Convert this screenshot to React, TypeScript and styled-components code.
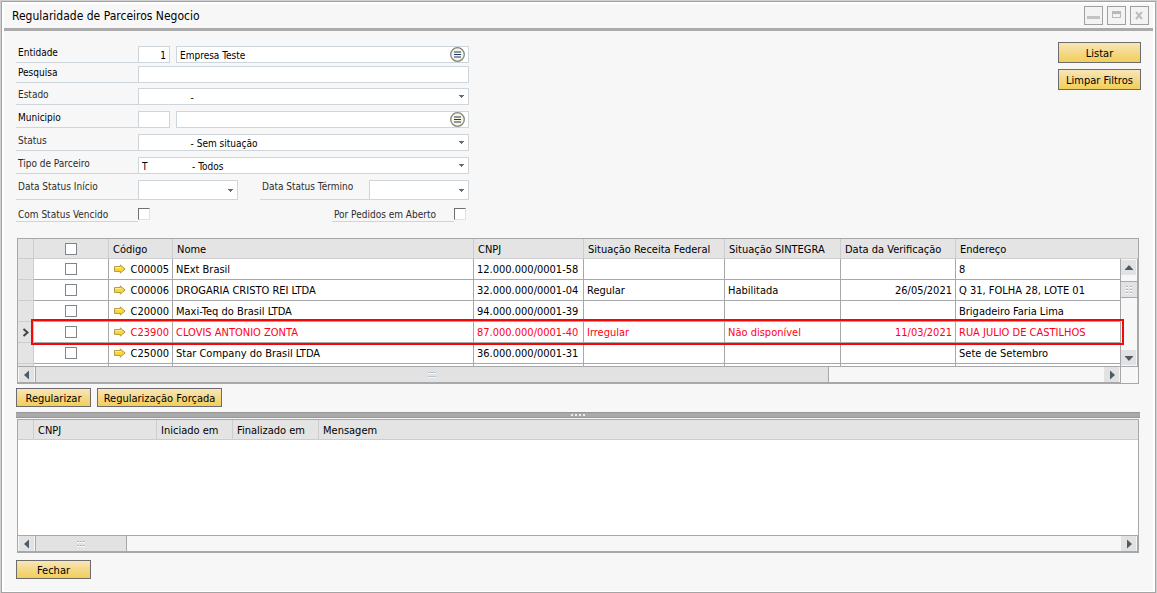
import React from 'react';
import styled, { createGlobalStyle, css } from 'styled-components';

const LINE = '#a6a8ab';
const SOFT = '#cdcdcd';
const FIELD = '#cfd6db';
const EM = '\u2003';
const NB = '\u00a0';

const GlobalStyle = createGlobalStyle`
  *, *::before, *::after { box-sizing: border-box; }
  body { margin: 0; background: #cfcfcf; }
  body, input, select, button, table {
    font-family: "DejaVu Sans Condensed", "DejaVu Sans", sans-serif;
    font-size: 11px;
    line-height: 14px;
    color: #000;
  }
`;

const Page = styled.div`
  min-height: 100vh;
  padding: 1px 1px 0;
  display: flex;
`;

const Frame = styled.main`
  flex: 1;
  min-width: 0;
  border: 1px solid #a4a4a4;
  background: #fff;
  padding: 2px 2px 1px;
  display: flex;
`;

const Inner = styled.div`
  flex: 1;
  min-width: 0;
  background: #f7f7f7;
`;

const TitleBar = styled.header`
  height: 27px;
  padding: 2px 4px 0 8px;
  display: flex;
  align-items: flex-start;
  justify-content: space-between;
  border-bottom: 3px solid #ababab;
`;

const Title = styled.h1`
  margin: 2px 0 0;
  font-size: 12px;
  line-height: 16px;
  font-weight: normal;
`;

const WindowControls = styled.div`
  display: flex;
  gap: 4px;
`;

const WindowButton = styled.button`
  width: 19px;
  height: 19px;
  padding: 0;
  border: 1px solid #a0a0a0;
  background: #f3f3f3;
  svg { display: block; }
`;

const Body = styled.div`
  padding: 11px 12px 11px;
`;

const Top = styled.div`
  display: flex;
  justify-content: space-between;
  align-items: flex-start;
`;

const Form = styled.form`
  width: 453px;
  margin-top: 4px;
  display: flex;
  flex-direction: column;
  gap: 5px;
`;

const RowGroup = styled.div<{ $gap: number }>`
  display: flex;
  flex-direction: column;
  gap: ${(p) => p.$gap}px;
`;

const FormRow = styled.div`
  display: flex;
`;

const CheckRow = styled(FormRow)`
  padding-top: 3px;
`;

const Label = styled.label<{ $width?: number; $strong?: boolean }>`
  flex: none;
  width: ${(p) => p.$width ?? 122}px;
  padding-left: 2px;
  border-bottom: 1px solid ${FIELD};
  font-size: 10px;
  line-height: 13px;
  color: ${(p) => (p.$strong ? '#000' : '#2c2c2c')};
`;

const FieldBox = styled.div<{ $width?: number; $height?: number }>`
  position: relative;
  display: flex;
  align-items: center;
  ${(p) => (p.$width ? css`flex: none; width: ${p.$width}px;` : css`flex: 1; min-width: 0;`)}
  height: ${(p) => p.$height ?? 17}px;
  border: 1px solid ${FIELD};
  background: #fff;
`;

const Gap = styled.span<{ $size: number }>`
  flex: none;
  width: ${(p) => p.$size}px;
`;

const TextInput = styled.input<{ $right?: boolean }>`
  flex: 1;
  min-width: 0;
  height: 15px;
  border: 0;
  outline: 0;
  padding: 2px 3px 0;
  background: transparent;
  font-size: 10px;
  line-height: 13px;
  text-align: ${(p) => (p.$right ? 'right' : 'left')};
`;

const Select = styled.select`
  appearance: none;
  flex: 1;
  min-width: 0;
  height: 15px;
  border: 0;
  outline: 0;
  padding: 2px 3px 0;
  background: transparent;
  font-size: 10px;
  line-height: 13px;
`;

const Caret = styled.svg`
  position: absolute;
  right: 4px;
  top: 0;
  bottom: 0;
  margin: auto 0;
  pointer-events: none;
`;

const PickButton = styled.button`
  flex: none;
  width: 15px;
  height: 15px;
  margin-right: 3px;
  padding: 0;
  border: 0;
  background: none;
  svg { display: block; }
`;

const FormCheck = styled.input`
  appearance: none;
  flex: none;
  width: 12px;
  height: 12px;
  margin: 0;
  background: #fff;
  border: 1px solid #e2e2e2;
  border-top-color: #6f6f6f;
  border-left-color: #6f6f6f;
`;

const Actions = styled.div`
  display: flex;
  flex-direction: column;
  gap: 6px;
`;

const GoldButton = styled.button<{ $width: number; $height?: number }>`
  width: ${(p) => p.$width}px;
  height: ${(p) => p.$height ?? 19}px;
  padding: 2px 0 0;
  border: 1px solid #6c6c6c;
  background: linear-gradient(#f7e6b8, #f5d888 50%, #f2cf58);
  white-space: nowrap;
`;

const Grid = styled.section`
  position: relative;
  margin: 16px 2px 0 1px;
  border: 1px solid ${LINE};
  background: #fff;
`;

const LogGrid = styled(Grid)`
  margin-top: 1px;
`;

const GridMain = styled.div`
  display: flex;
`;

const TableClip = styled.div<{ $height: number }>`
  flex: 1;
  min-width: 0;
  height: ${(p) => p.$height}px;
  overflow: hidden;
`;

const Table = styled.table`
  width: 100%;
  table-layout: fixed;
  border-collapse: separate;
  border-spacing: 0;
`;

const Th = styled.th<{ $center?: boolean }>`
  height: 20px;
  padding: ${(p) => (p.$center ? '0' : '2px 0 0 4px')};
  background: #e4e4e4;
  border-right: 1px solid ${SOFT};
  border-bottom: 1px solid ${SOFT};
  font-weight: normal;
  text-align: left;
  white-space: nowrap;
  &:last-child { border-right: 0; }
`;

const Td = styled.td<{ $right?: boolean; $center?: boolean }>`
  height: 21px;
  padding: ${(p) => (p.$center ? '0' : '1px 3px 0')};
  border-right: 1px solid ${LINE};
  border-bottom: 1px solid ${LINE};
  text-align: ${(p) => (p.$right ? 'right' : 'left')};
  white-space: nowrap;
  overflow: hidden;
`;

const RowHead = styled.td`
  padding: 0;
  background: #e4e4e4;
  border-right: 1px solid ${SOFT};
  border-bottom: 1px solid ${SOFT};
  svg { display: block; margin-left: 4px; }
`;

const Tr = styled.tr<{ $alert?: boolean }>`
  color: ${(p) => (p.$alert ? '#ff0018' : '#000')};
`;

const CenterCell = styled.div`
  display: flex;
  justify-content: center;
`;

const Check = styled.input`
  appearance: none;
  width: 12px;
  height: 12px;
  margin: 0;
  background: #fff;
  border: 1px solid #80858c;
`;

const Code = styled.div`
  display: flex;
  align-items: center;
  gap: 5px;
  padding-left: 2px;
  svg { margin-bottom: 2px; }
`;

const VScroll = styled.div`
  flex: none;
  width: 17px;
  display: flex;
  flex-direction: column;
`;

const ScrollCap = styled.div`
  height: 20px;
  background: #e4e4e4;
  border-bottom: 1px solid ${SOFT};
`;

const VTrack = styled.div`
  flex: 1;
  display: flex;
  flex-direction: column;
  background: #f7f7f7;
  border-right: 1px solid ${LINE};
`;

const ScrollButton = styled.button`
  flex: none;
  width: 15px;
  height: 15px;
  margin: 0 1px;
  padding: 0;
  border: 0;
  background: #e2e2e2;
  display: flex;
  align-items: center;
  justify-content: center;
`;

const VButton = styled(ScrollButton)`
  margin: 1px 0;
`;

const VThumb = styled.div`
  height: 17px;
  margin-top: 5px;
  background: #e2e2e2;
  border: solid ${LINE};
  border-width: 1px 0;
  display: flex;
  align-items: center;
  justify-content: center;
`;

const Spacer = styled.div`
  flex: 1;
`;

const HRow = styled.div`
  display: flex;
  background: #f7f7f7;
  border-top: 1px solid ${LINE};
`;

const HTrack = styled.div`
  flex: 1;
  height: 16px;
  display: flex;
  align-items: center;
  border-right: 1px solid ${LINE};
  border-bottom: 1px solid ${LINE};
`;

const HRail = styled.div`
  flex: 1;
  align-self: stretch;
  display: flex;
`;

const HThumb = styled.div<{ $share: number }>`
  width: ${(p) => p.$share}%;
  background: #e2e2e2;
  border: solid ${LINE};
  border-width: 0 1px;
  display: flex;
  align-items: center;
  justify-content: center;
`;

const Corner = styled.div`
  width: 17px;
`;

const Highlight = styled.div`
  position: absolute;
  left: 13px;
  right: 14px;
  top: 80px;
  height: 26px;
  border: 2px solid #fa0505;
  pointer-events: none;
`;

const ButtonRow = styled.div`
  display: flex;
  gap: 6px;
  margin-top: 4px;
`;

const FooterRow = styled(ButtonRow)`
  margin-top: 7px;
`;

const Splitter = styled.div`
  height: 6px;
  margin: 5px 1px 0 0;
  background: #a9a9a9;
  border: solid #959595;
  border-width: 1px 0;
  display: flex;
  align-items: center;
  justify-content: center;
`;

function Down() {
  return (
    <Caret width="5" height="3" viewBox="0 0 5 3" shapeRendering="crispEdges">
      <path d="M0 0h5v1H0zM1 1h3v1H1zM2 2h1v1H2z" fill="#6d6d6d" />
    </Caret>
  );
}

function PickIcon() {
  return (
    <svg width="15" height="15" viewBox="0 0 15 15">
      <circle cx="7.5" cy="7.5" r="6.8" fill="#f7f5e3" stroke="#85857f" strokeWidth="1.3" />
      <path d="M4 5h7M4 7.500h7M4 10h7" stroke="#22386b" strokeWidth="1.2" />
    </svg>
  );
}

function LinkArrow() {
  return (
    <svg width="12" height="10" viewBox="0 0 12 10">
      <path d="M.5 2.500h6V.8L11.500 5 6.500 9.200V7.500H.5z" fill="#f8d938" stroke="#b09440" strokeLinejoin="round" />
      <path d="M1.200 3.500h6" stroke="#fff1a0" />
    </svg>
  );
}

const arrows: Record<string, string> = {
  up: 'M5 2L9.500 7H.5z',
  down: 'M.5 3h9L5 8z',
  left: 'M7 .5v9L2 5z',
  right: 'M3 .5v9L8 5z',
};

function ScrollArrow({ dir }: { dir: string }) {
  return (
    <svg width="10" height="10" viewBox="0 0 10 10">
      <path d={arrows[dir]} fill="#4b5b69" />
    </svg>
  );
}

function Grip({ vertical }: { vertical?: boolean }) {
  const pts = vertical
    ? [[0, 0], [4, 0], [0, 3], [4, 3], [0, 6], [4, 6]]
    : [[0, 0], [3, 0], [6, 0], [0, 4], [3, 4], [6, 4]];
  return (
    <svg width="8" height="8" viewBox={vertical ? '-1 0 8 8' : '0 -1 8 8'} shapeRendering="crispEdges">
      {pts.map(([x, y]) => (
        <g key={`${x}-${y}`}>
          <rect x={x} y={y} width="2" height="2" fill="#fff" />
          <rect x={x} y={y} width="2" height="1" fill="#a9b5c2" />
        </g>
      ))}
    </svg>
  );
}

function SelectField({ id, text, width, height }: { id: string; text: string; width?: number; height?: number }) {
  return (
    <FieldBox $width={width} $height={height}>
      <Select id={id}>
        <option>{text}</option>
      </Select>
      <Down />
    </FieldBox>
  );
}

function HorizontalScroll({ share, corner }: { share: number; corner?: boolean }) {
  return (
    <HRow>
      <HTrack>
        <ScrollButton aria-label="Rolar para a esquerda"><ScrollArrow dir="left" /></ScrollButton>
        <HRail>
          <HThumb $share={share}><Grip /></HThumb>
        </HRail>
        <ScrollButton aria-label="Rolar para a direita"><ScrollArrow dir="right" /></ScrollButton>
      </HTrack>
      {corner && <Corner />}
    </HRow>
  );
}

interface Partner {
  code: string;
  name: string;
  cnpj: string;
  federal?: string;
  sintegra?: string;
  date?: string;
  address: string;
  alert?: boolean;
}

const partners: Partner[] = [
  { code: 'C00005', name: 'NExt Brasil', cnpj: '12.000.000/0001-58', address: '8' },
  { code: 'C00006', name: 'DROGARIA CRISTO REI LTDA', cnpj: '32.000.000/0001-04', federal: 'Regular', sintegra: 'Habilitada', date: '26/05/2021', address: 'Q 31, FOLHA 28, LOTE 01' },
  { code: 'C20000', name: 'Maxi-Teq do Brasil LTDA', cnpj: '94.000.000/0001-39', address: 'Brigadeiro Faria Lima' },
  { code: 'C23900', name: 'CLOVIS ANTONIO ZONTA', cnpj: '87.000.000/0001-40', federal: 'Irregular', sintegra: 'Não disponível', date: '11/03/2021', address: 'RUA JULIO DE CASTILHOS', alert: true },
  { code: 'C25000', name: 'Star Company do Brasil LTDA', cnpj: '36.000.000/0001-31', address: 'Sete de Setembro' },
];

const columnWidths = [16, 75, 64, 301, 110, 141, 116, 115];
const headings = ['Código', 'Nome', 'CNPJ', 'Situação Receita Federal', 'Situação SINTEGRA', 'Data da Verificação', 'Endereço'];
const logWidths = [16, 123, 76, 86];

const Col = styled.col<{ $width?: number }>`
  ${(p) => p.$width && css`width: ${p.$width}px;`}
`;

export default function App() {
  return (
    <Page>
      <GlobalStyle />
      <Frame>
        <Inner>
          <TitleBar>
            <Title>Regularidade de Parceiros Negocio</Title>
            <WindowControls>
              <WindowButton aria-label="Minimizar">
                <svg width="17" height="17" viewBox="0 0 17 17"><path d="M2 9h13v3H2z" fill="#c3c3c3" /></svg>
              </WindowButton>
              <WindowButton aria-label="Maximizar">
                <svg width="17" height="17" viewBox="0 0 17 17" shapeRendering="crispEdges">
                  <path d="M4 4h9v7H4zM5 7v3h7V7z" fill="#b9b9b9" fillRule="evenodd" />
                </svg>
              </WindowButton>
              <WindowButton aria-label="Fechar janela">
                <svg width="17" height="17" viewBox="0 0 17 17">
                  <path d="M5 5l6 7M11 5l-6 7" stroke="#bdbdbd" strokeWidth="2" />
                </svg>
              </WindowButton>
            </WindowControls>
          </TitleBar>
          <Body>
            <Top>
              <Form>
                <RowGroup $gap={3}>
                  <FormRow>
                    <Label htmlFor="entidade" $strong>Entidade</Label>
                    <FieldBox $width={32}><TextInput id="entidade" defaultValue="1" $right /></FieldBox>
                    <Gap $size={6} />
                    <FieldBox>
                      <TextInput aria-label="Nome da entidade" defaultValue="Empresa Teste" />
                      <PickButton type="button" aria-label="Escolher entidade"><PickIcon /></PickButton>
                    </FieldBox>
                  </FormRow>
                  <FormRow>
                    <Label htmlFor="pesquisa" $strong>Pesquisa</Label>
                    <FieldBox><TextInput id="pesquisa" /></FieldBox>
                  </FormRow>
                </RowGroup>
                <RowGroup $gap={6}>
                  <FormRow>
                    <Label htmlFor="estado">Estado</Label>
                    <SelectField id="estado" text={`${NB.repeat(17)}-`} />
                  </FormRow>
                  <FormRow>
                    <Label htmlFor="municipio" $strong>Municipio</Label>
                    <FieldBox $width={32}><TextInput id="municipio" /></FieldBox>
                    <Gap $size={6} />
                    <FieldBox>
                      <TextInput aria-label="Nome do município" />
                      <PickButton type="button" aria-label="Escolher município"><PickIcon /></PickButton>
                    </FieldBox>
                  </FormRow>
                  <FormRow>
                    <Label htmlFor="status">Status</Label>
                    <SelectField id="status" text={`${NB.repeat(17)}- Sem situação`} />
                  </FormRow>
                  <FormRow>
                    <Label htmlFor="tipo">Tipo de Parceiro</Label>
                    <SelectField id="tipo" text={`T${EM.repeat(4)}${NB.repeat(3)}- Todos`} />
                  </FormRow>
                  <FormRow>
                    <Label htmlFor="inicio">Data Status Início</Label>
                    <SelectField id="inicio" text="" width={100} height={20} />
                    <Gap $size={22} />
                    <Label htmlFor="termino" $width={109}>Data Status Término</Label>
                    <SelectField id="termino" text="" width={100} height={20} />
                  </FormRow>
                </RowGroup>
                <CheckRow>
                  <Label htmlFor="vencido">Com Status Vencido</Label>
                  <FormCheck id="vencido" type="checkbox" />
                  <Gap $size={182} />
                  <Label htmlFor="pedidos">Por Pedidos em Aberto</Label>
                  <FormCheck id="pedidos" type="checkbox" />
                </CheckRow>
              </Form>
              <Actions>
                <GoldButton $width={83} $height={21}>Listar</GoldButton>
                <GoldButton $width={83} $height={21}>Limpar Filtros</GoldButton>
              </Actions>
            </Top>

            <Grid>
              <GridMain>
                <TableClip $height={127}>
                  <Table>
                    <colgroup>
                      {columnWidths.map((w, i) => <Col key={i} $width={w} />)}
                      <Col />
                    </colgroup>
                    <thead>
                      <tr>
                        <Th />
                        <Th $center><CenterCell><Check type="checkbox" aria-label="Selecionar todos" /></CenterCell></Th>
                        {headings.map((h) => <Th key={h}>{h}</Th>)}
                      </tr>
                    </thead>
                    <tbody>
                      {partners.map((p) => (
                        <Tr key={p.code} $alert={p.alert}>
                          <RowHead>
                            {p.alert && (
                              <svg width="8" height="9" viewBox="0 0 8 9">
                                <path d="M1.500 1l4 3.500-4 3.500" fill="none" stroke="#444" strokeWidth="2" />
                              </svg>
                            )}
                          </RowHead>
                          <Td $center><CenterCell><Check type="checkbox" aria-label={`Selecionar ${p.code}`} /></CenterCell></Td>
                          <Td><Code><LinkArrow />{p.code}</Code></Td>
                          <Td>{p.name}</Td>
                          <Td>{p.cnpj}</Td>
                          <Td>{p.federal}</Td>
                          <Td>{p.sintegra}</Td>
                          <Td $right>{p.date}</Td>
                          <Td>{p.address}</Td>
                        </Tr>
                      ))}
                      <Tr>
                        <RowHead />
                        {columnWidths.map((_, i) => <Td key={i} />)}
                      </Tr>
                    </tbody>
                  </Table>
                </TableClip>
                <VScroll>
                  <ScrollCap />
                  <VTrack>
                    <VButton aria-label="Rolar para cima"><ScrollArrow dir="up" /></VButton>
                    <VThumb><Grip vertical /></VThumb>
                    <Spacer />
                    <VButton aria-label="Rolar para baixo"><ScrollArrow dir="down" /></VButton>
                  </VTrack>
                </VScroll>
              </GridMain>
              <HorizontalScroll share={74.3} corner />
              <Highlight />
            </Grid>

            <ButtonRow>
              <GoldButton $width={75}>Regularizar</GoldButton>
              <GoldButton $width={125}>Regularização Forçada</GoldButton>
            </ButtonRow>

            <Splitter>
              <svg width="14" height="2" viewBox="0 0 14 2" shapeRendering="crispEdges">
                <path d="M0 0h2v2H0zM4 0h2v2H4zM8 0h2v2H8zM12 0h2v2h-2z" fill="#ececec" />
              </svg>
            </Splitter>

            <LogGrid>
              <TableClip $height={115}>
                <Table>
                  <colgroup>
                    {logWidths.map((w, i) => <Col key={i} $width={w} />)}
                    <Col />
                  </colgroup>
                  <thead>
                    <tr>
                      <Th />
                      <Th>CNPJ</Th>
                      <Th>Iniciado em</Th>
                      <Th>Finalizado em</Th>
                      <Th>Mensagem</Th>
                    </tr>
                  </thead>
                </Table>
              </TableClip>
              <HorizontalScroll share={8.5} />
            </LogGrid>

            <FooterRow>
              <GoldButton $width={75}>Fechar</GoldButton>
            </FooterRow>
          </Body>
        </Inner>
      </Frame>
    </Page>
  );
}
